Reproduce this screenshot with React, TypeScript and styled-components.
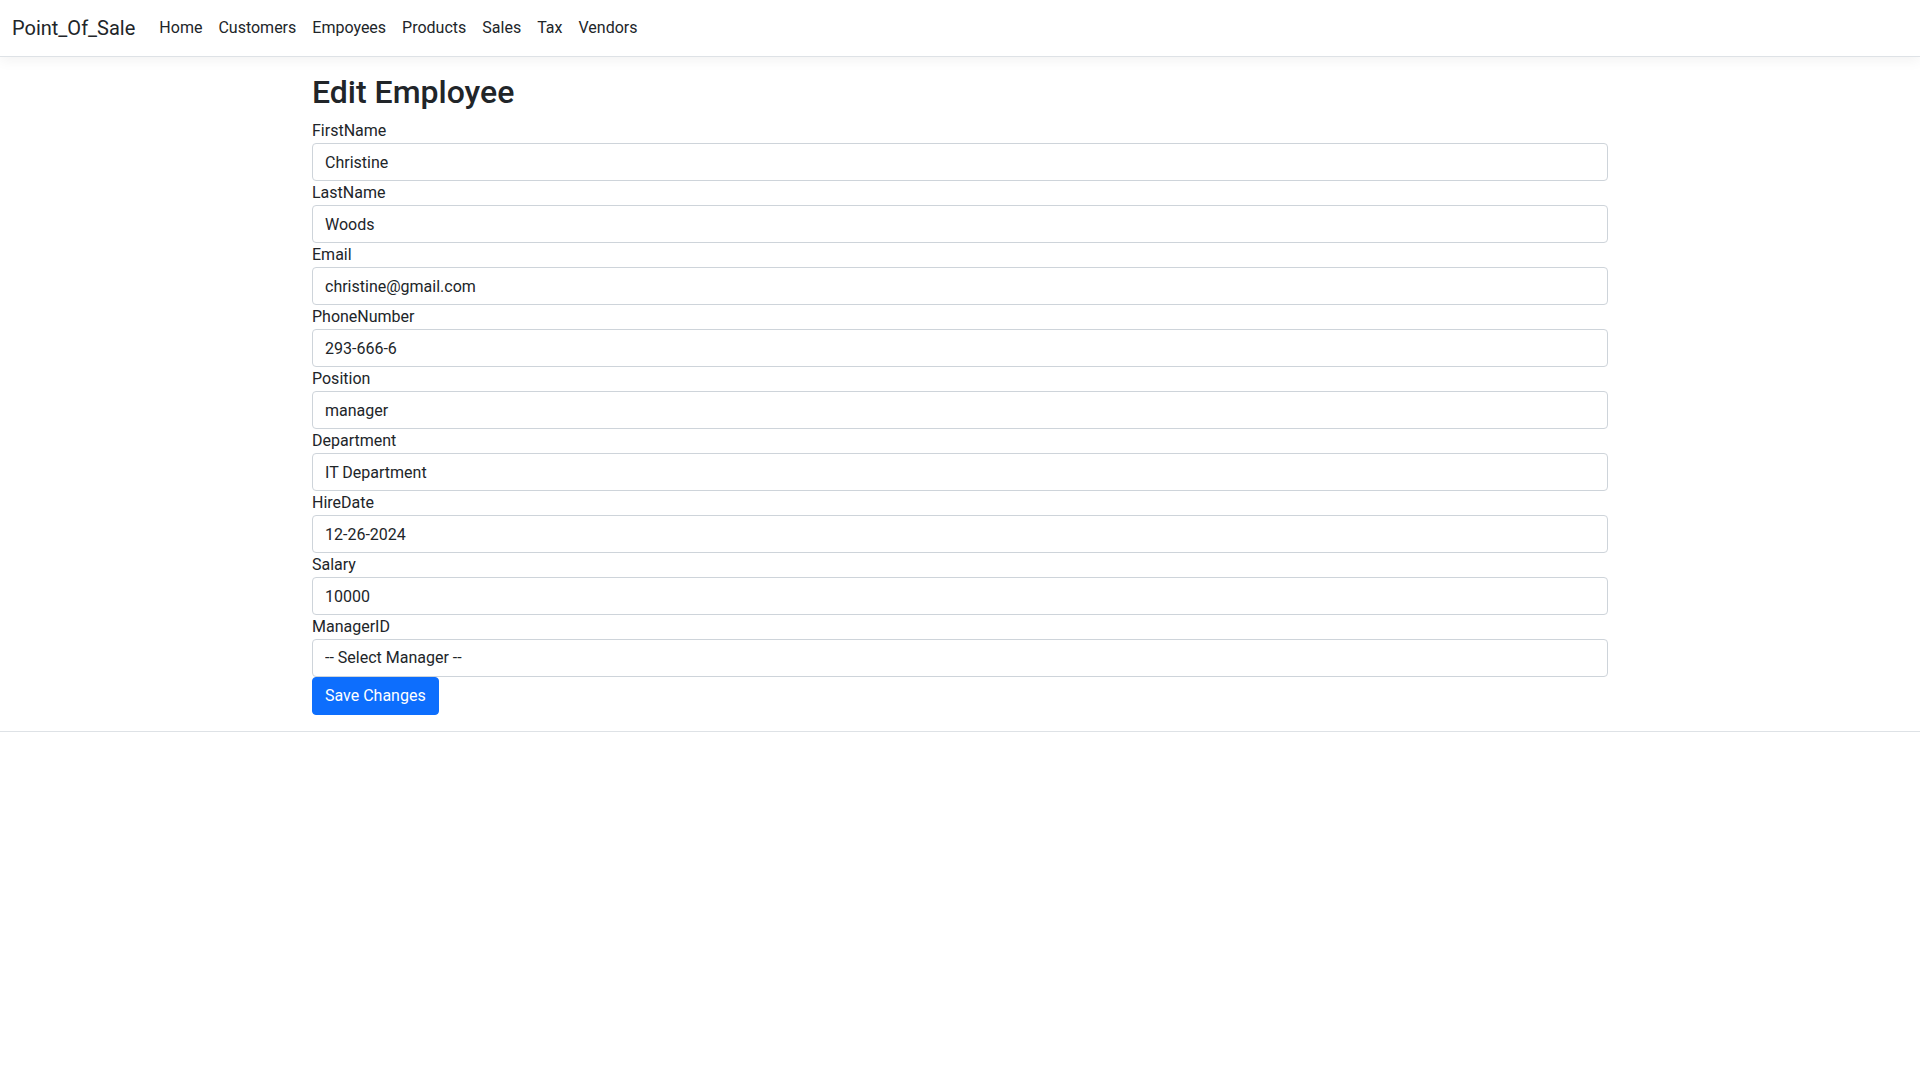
import React, { useState } from "react";
import styled, { createGlobalStyle } from "styled-components";

const GlobalStyle = createGlobalStyle`
  *, *::before, *::after { box-sizing: border-box; }
  html, body { margin: 0; padding: 0; }
  body {
    font-family: "Segoe UI", Roboto, sans-serif;
    font-size: 16px;
    line-height: 1.5;
    color: #212529;
    background: #fff;
  }
`;

type Field = { name: string; value: string };

const initialFields: Field[] = [
  { name: "FirstName", value: "Christine" },
  { name: "LastName", value: "Woods" },
  { name: "Email", value: "christine@gmail.com" },
  { name: "PhoneNumber", value: "293-666-6" },
  { name: "Position", value: "manager" },
  { name: "Department", value: "IT Department" },
  { name: "HireDate", value: "12-26-2024" },
  { name: "Salary", value: "10000" },
];

const navLinks = ["Home", "Customers", "Empoyees", "Products", "Sales", "Tax", "Vendors"];

const App = () => {
  const [fields, setFields] = useState(initialFields);

  const handleChange = (idx: number) => (e: React.ChangeEvent<HTMLInputElement>) => {
    const next = [...fields];
    next[idx] = { ...next[idx], value: e.target.value };
    setFields(next);
  };

  return (
    <>
      <GlobalStyle />
      <Navbar>
        <Brand href="#">Point_Of_Sale</Brand>
        <NavList>
          {navLinks.map((link) => (
            <NavLink key={link} href="#">
              {link}
            </NavLink>
          ))}
        </NavList>
      </Navbar>
      <Container>
        <Main>
          <Title>Edit Employee</Title>
          <form onSubmit={(e) => e.preventDefault()}>
            {fields.map((field, idx) => (
              <Group key={field.name}>
                <Label htmlFor={field.name}>{field.name}</Label>
                <Input id={field.name} value={field.value} onChange={handleChange(idx)} />
              </Group>
            ))}
            <Group>
              <Label htmlFor="ManagerID">ManagerID</Label>
              <Select id="ManagerID" defaultValue="">
                <option value="">-- Select Manager --</option>
              </Select>
            </Group>
            <SaveButton type="submit">Save Changes</SaveButton>
          </form>
        </Main>
      </Container>
      <Footer />
    </>
  );
};

const Navbar = styled.nav`
  display: flex;
  align-items: center;
  height: 57px;
  padding: 8px 12px;
  margin-bottom: 16px;
  border-bottom: 1px solid #dee2e6;
  box-shadow: 0 4px 12px rgba(0, 0, 0, 0.05);
  background: #fff;
`;

const Brand = styled.a`
  font-size: 20px;
  line-height: 30px;
  padding: 5px 0;
  margin-right: 16px;
  color: #212529;
  text-decoration: none;
`;

const NavList = styled.div`
  display: flex;
`;

const NavLink = styled.a`
  padding: 8px;
  color: #212529;
  text-decoration: none;
`;

const Container = styled.div`
  width: 1320px;
  margin: 0 auto;
  padding: 0 12px;
`;

const Main = styled.main`
  padding-bottom: 16px;
`;

const Title = styled.h2`
  margin: 0 0 8px;
  font-size: 32px;
  font-weight: 500;
  line-height: 1.2;
`;

const Group = styled.div``;

const Label = styled.label`
  display: inline-block;
`;

const Input = styled.input`
  display: block;
  width: 100%;
  height: 38px;
  padding: 6px 12px;
  font: inherit;
  color: #212529;
  background: #fff;
  border: 1px solid #ced4da;
  border-radius: 4px;
  outline: none;
`;

const Select = styled.select`
  display: block;
  width: 100%;
  height: 38px;
  padding: 6px 12px;
  font: inherit;
  color: #212529;
  background: #fff;
  border: 1px solid #ced4da;
  border-radius: 4px;
  appearance: none;
  outline: none;
`;

const SaveButton = styled.button`
  display: inline-block;
  height: 38px;
  padding: 6px 12px;
  font: inherit;
  color: #fff;
  background: #0d6efd;
  border: 1px solid #0d6efd;
  border-radius: 4px;
  cursor: pointer;
`;

const Footer = styled.footer`
  border-top: 1px solid #dee2e6;
`;

export default App;
